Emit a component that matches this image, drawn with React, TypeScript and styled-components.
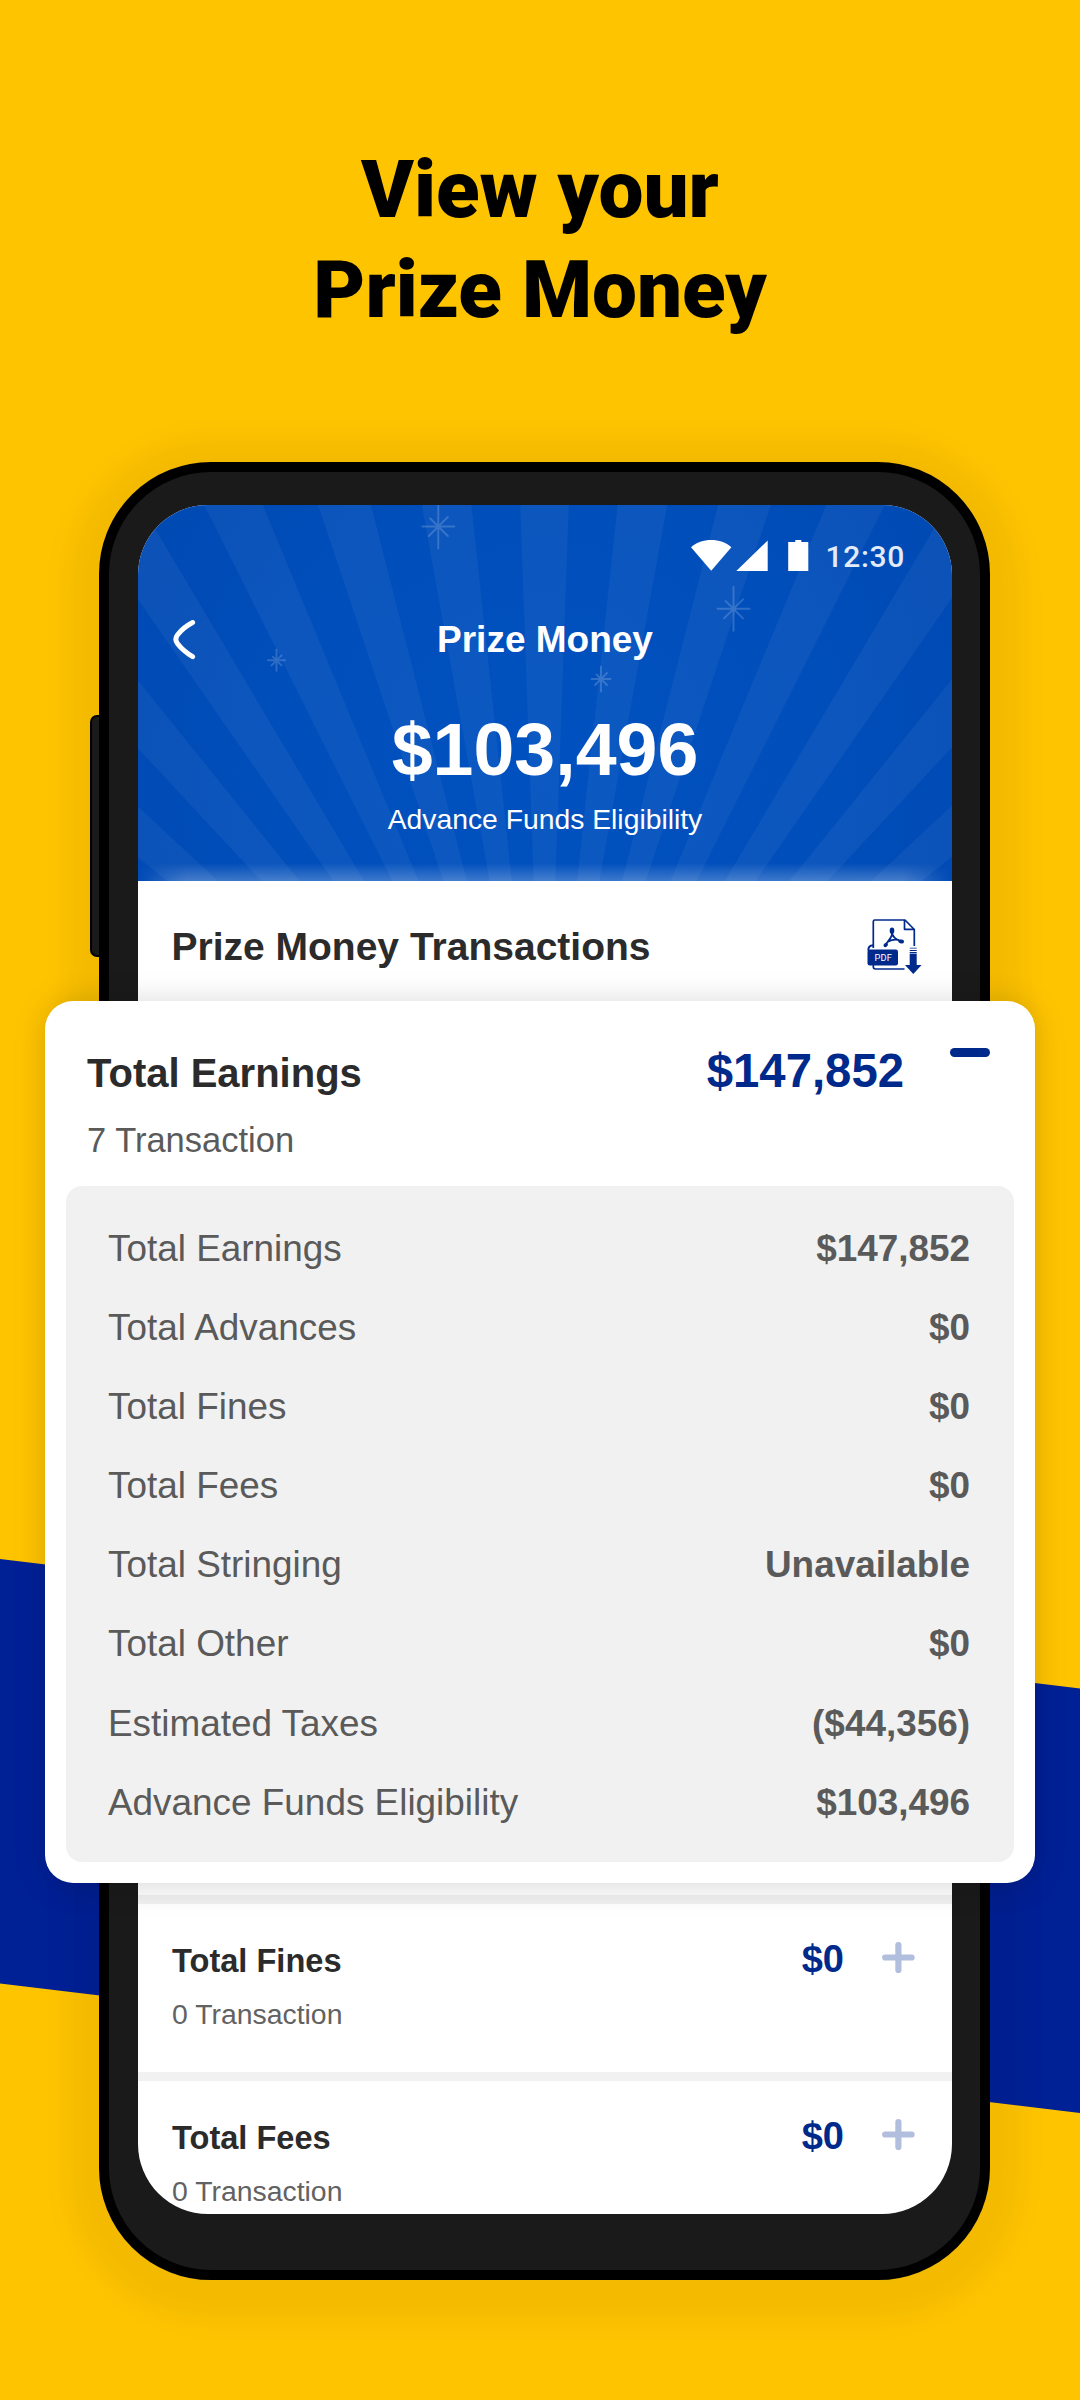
import React from "react";
import styled, { createGlobalStyle } from "styled-components";

const sans = `"Liberation Sans", Arial, sans-serif`;
const navy = "#00298c";

const GlobalStyle = createGlobalStyle`
  *, *::before, *::after { box-sizing: border-box; }
  body { margin: 0; background: #ffc400; }
  h1, h2, h3, p, ul, dl, dd, dt { margin: 0; padding: 0; font-weight: inherit; font-size: inherit; }
  svg { display: block; flex: none; }
`;

const Page = styled.main`
  position: relative;
  width: 1080px;
  height: 2400px;
  overflow: hidden;
  background: #ffc400;
  font-family: ${sans};
`;

const Band = styled.div`
  position: absolute;
  inset: 1559px 0 auto 0;
  height: 555px;
  background: #002096;
  clip-path: polygon(0 0, 100% 129.5px, 100% 554px, 0 424.5px);
`;

const Headline = styled.h1`
  padding-top: 140px;
  height: 340px;
  text-align: center;
  color: #000;
  && { font: 900 80px/100px Roboto, sans-serif; }
`;

const Phone = styled.section`
  position: relative;
  width: 891px;
  height: 1818px;
  margin: 122px 0 0 99px;
  padding: 33px 28px 56px 29px;
  border: 10px solid #000;
  border-radius: 112px;
  background: #1a1a1a;
  box-shadow: 0 8px 28px 32px rgba(0, 0, 0, 0.05);
`;

const SideButton = styled.div`
  position: absolute;
  left: -19px;
  top: 243px;
  width: 9px;
  height: 242px;
  border: 2px solid #000;
  border-right: 0;
  border-radius: 7px 0 0 7px;
  background: #1a1a1a;
`;

const Screen = styled.div`
  height: 1709px;
  border-radius: 70px;
  overflow: hidden;
  background: #fff;
  display: flex;
  flex-direction: column;
`;

const Hero = styled.header`
  position: relative;
  height: 376px;
  flex: none;
  padding-top: 35px;
  color: #fff;
  display: flex;
  flex-direction: column;
  align-items: center;
  isolation: isolate;
`;

const HeroArt = styled.svg`
  position: absolute;
  inset: 0;
  z-index: -1;
`;

const StatusBar = styled.div`
  width: 100%;
  height: 31px;
  padding-right: 47px;
  display: flex;
  justify-content: flex-end;
  align-items: center;
`;

const Clock = styled.time`
  margin-left: 15px;
  padding-top: 1px;
  font: 500 30px/31px Roboto, sans-serif;
  letter-spacing: 0.7px;
  color: #e3ebf8;
`;

const NavBar = styled.div`
  width: 100%;
  height: 44px;
  margin-top: 47px;
  padding: 0 34px;
  display: grid;
  grid-template-columns: 60px 1fr 60px;
  align-items: center;
`;

const NavTitle = styled.h2`
  && { font-size: 37px; font-weight: 700; }
  line-height: 44px;
  text-align: center;
`;

const HeroAmount = styled.p`
  margin-top: 48px;
  font-size: 73.5px;
  font-weight: 700;
  line-height: 80px;
`;

const HeroCaption = styled.p`
  margin-top: 12px;
  font-size: 28.3px;
  line-height: 34px;
`;

const SectionHead = styled.div`
  flex: none;
  height: 57px;
  margin-top: 36px;
  padding: 0 29px 0 33.5px;
  display: flex;
  align-items: center;
  justify-content: space-between;
`;

const SectionTitle = styled.h2`
  && { font-size: 39px; font-weight: 700; }
  padding-top: 2px;
  line-height: 46px;
  color: #2b2b2b;
`;

const List = styled.ul`
  flex: none;
  margin-top: 921px;
  list-style: none;
`;

const Item = styled.li`
  height: 177px;
  padding: 35px 37px 0 34px;
  border-top: 9px solid #f1f1f1;
`;

const ItemTop = styled.div`
  display: flex;
  height: 40px;
  line-height: 40px;
  align-items: baseline;
`;

const ItemTitle = styled.h3`
  && { font-size: 32.6px; font-weight: 700; }
  flex: 1;
  color: #2b2b2b;
`;

const ItemAmount = styled.span`
  margin-right: 38px;
  font-size: 38px;
  font-weight: 700;
  color: ${navy};
`;

const PlusIcon = styled.svg`
  align-self: flex-start;
  margin-top: 2px;
`;

const ItemNote = styled.p`
  margin-top: 18px;
  font-size: 28.4px;
  line-height: 34px;
  color: #626262;
`;

const Card = styled.section`
  position: absolute;
  left: 45px;
  top: 1001px;
  width: 990px;
  height: 882px;
  padding: 46px 21px 21px;
  border-radius: 28px;
  background: #fff;
  box-shadow: 0 2px 32px rgba(0, 0, 0, 0.17);
`;

const CardTop = styled.div`
  display: flex;
  align-items: baseline;
  height: 48px;
  line-height: 48px;
  padding: 0 24px 0 21px;
`;

const CardTitle = styled.h2`
  && { font-size: 40px; font-weight: 700; }
  flex: 1;
  color: #2b2b2b;
`;

const CardAmount = styled.span`
  margin-right: 46px;
  font-size: 47.3px;
  font-weight: 700;
  color: ${navy};
`;

const Collapse = styled.span`
  align-self: flex-start;
  width: 40px;
  height: 9px;
  margin-top: 1px;
  border-radius: 5px;
  background: ${navy};
`;

const CardNote = styled.p`
  margin-top: 24px;
  padding-left: 21px;
  font-size: 34.5px;
  line-height: 42px;
  color: #5a5a5a;
`;

const Panel = styled.dl`
  && { padding: 23px 44px 20px 42px; }
  && { margin-top: 25px; }
  width: 948px;
  height: 676px;
  border-radius: 16px;
  background: #f1f1f1;
`;

const Line = styled.div`
  display: flex;
  justify-content: space-between;
  height: 79.1px;
  line-height: 79px;
  font-size: 36.9px;
  color: #5a5a5a;
`;

const LineValue = styled.dd`
  && { font-weight: 700; }
`;

const rays = Array.from({ length: 23 }, (_, i) => {
  const step = (2 * Math.PI) / 44;
  const mid = (i - 11) * step;
  const at = (a: number) => `${406.5 + 1400 * Math.sin(a)},${680 - 1400 * Math.cos(a)}`;
  return `406.5,680 ${at(mid - step / 4)} ${at(mid + step / 4)}`;
});

const stars = [
  { x: 300.3, y: 21.5, v: 22, h: 16, d: 9.5 },
  { x: 138.5, y: 155.3, v: 10.5, h: 8.5, d: 5 },
  { x: 595.5, y: 103.8, v: 22, h: 16, d: 9.5 },
  { x: 463, y: 174, v: 12.5, h: 9.5, d: 6 },
];

const HeroBackdrop = () => (
  <HeroArt width="814" height="376" viewBox="0 0 814 376">
    <defs>
      <radialGradient id="sky" gradientUnits="userSpaceOnUse" cx="407" cy="260" r="480">
        <stop offset="0" stopColor="#0051c0" />
        <stop offset="0.6" stopColor="#004eba" />
        <stop offset="1" stopColor="#0049b3" />
      </radialGradient>
      <linearGradient id="glow" x1="0" y1="0" x2="0" y2="1">
        <stop offset="0" stopColor="#fff" stopOpacity="0" />
        <stop offset="1" stopColor="#fff" stopOpacity="0.24" />
      </linearGradient>
      <linearGradient id="fade" x1="0" y1="0" x2="1" y2="0">
        <stop offset="0" stopColor="#000" />
        <stop offset="0.06" stopColor="#fff" />
        <stop offset="0.94" stopColor="#fff" />
        <stop offset="1" stopColor="#000" />
      </linearGradient>
      <mask id="edge">
        <rect y="350" width="814" height="26" fill="url(#fade)" />
      </mask>
    </defs>
    <rect width="814" height="376" fill="url(#sky)" />
    {rays.map((points) => (
      <polygon key={points} points={points} fill="#fff" fillOpacity="0.048" />
    ))}
    <g stroke="#fff" strokeOpacity="0.18" strokeWidth="1.9" strokeLinecap="round">
      {stars.map((s) => (
        <path
          key={s.x}
          d={`M${s.x} ${s.y - s.v}v${2 * s.v}M${s.x - s.h} ${s.y}h${2 * s.h}M${s.x - s.d + 1.5} ${s.y - s.d + 1.5}l${2 * s.d - 1.5} ${2 * s.d - 1.5}M${s.x + s.d} ${s.y - s.d}l${-2 * s.d} ${2 * s.d}`}
        />
      ))}
    </g>
    <rect y="358" width="814" height="18" fill="url(#glow)" mask="url(#edge)" />
  </HeroArt>
);

const StatusIcons = () => (
  <svg width="119" height="31" viewBox="0 0 119 31" fill="#fff">
    <path d="M0 7.2C5.500 2.500 12.600 0 20.200 0S34.900 2.500 40.400 7.200L20.200 30.800Z" />
    <path d="M45.300 31L76.700 0.500V31Z" />
    <path d="M104.300 0h6v1.900h7V31H97.200V1.900h7.100Z" />
  </svg>
);

const BackIcon = () => (
  <svg width="26" height="42" viewBox="0 0 26 42" fill="none" stroke="#fff" strokeWidth="5" strokeLinecap="round">
    <path d="M20.600 3.500C14 7 9 11.300 5.600 15.700C3.200 18.800 3.200 21.700 5.600 24.800C9 29.200 14 33.700 20.600 37.700" />
  </svg>
);

const PdfIcon = () => (
  <svg width="56" height="57" viewBox="0 0 56 57" fill="none" stroke={navy} strokeWidth="1.7" strokeLinejoin="round">
    <path d="M6.300 31V4.500Q6.300 3 7.800 3H38L47.300 12.500V29" />
    <path d="M37.500 3V12.300H47.300" />
    <path d="M6.300 28.300Q1.300 28.300 1.300 33.500" strokeWidth="2" />
    <path d="M6.300 48V49.800Q6.300 52 8.500 52H37.500" />
    <rect x="0.500" y="32.500" width="30.500" height="16" rx="2.200" fill={navy} stroke="none" />
    <text x="16.300" y="44" textAnchor="middle" fontFamily="Roboto, sans-serif" fontSize="9.300" letterSpacing="0.100" fill="#fff" stroke="none">
      PDF
    </text>
    <path d="M25 14.500C27 19 20 25 18.200 28.200M25 14.500C24 19 30 23.500 35 24.500M20.500 25Q26 21.800 32 23" strokeWidth="1.800" />
    <g fill={navy} stroke="none">
      <ellipse cx="25" cy="13.700" rx="2.300" ry="3.200" />
      <ellipse cx="18.700" cy="28" rx="2.400" ry="1.900" transform="rotate(-38 18.700 28)" />
      <ellipse cx="34.200" cy="24.500" rx="2.800" ry="2" transform="rotate(10 34.200 24.500)" />
      <path d="M42.700 30.800h7v0.800h-7zM42.700 32.900h7v1.100h-7zM42.700 34.900h7v1.300h-7z" />
      <path d="M42.700 36.800h7V48h4.900L46.300 57L38 48h4.700Z" />
    </g>
  </svg>
);

const Plus = () => (
  <PlusIcon width="33" height="33" viewBox="0 0 33 33" stroke="#b2bedd" strokeWidth="6.2" strokeLinecap="round">
    <path d="M3.200 16.500H29.600M16.400 4V29" />
  </PlusIcon>
);

const breakdown = [
  ["Total Earnings", "$147,852"],
  ["Total Advances", "$0"],
  ["Total Fines", "$0"],
  ["Total Fees", "$0"],
  ["Total Stringing", "Unavailable"],
  ["Total Other", "$0"],
  ["Estimated Taxes", "($44,356)"],
  ["Advance Funds Eligibility", "$103,496"],
];

export default function App() {
  return (
    <Page>
      <GlobalStyle />
      <Band />
      <Headline>
        View your
        <br />
        Prize Money
      </Headline>
      <Phone>
        <SideButton />
        <Screen>
          <Hero>
            <HeroBackdrop />
            <StatusBar>
              <StatusIcons />
              <Clock>12:30</Clock>
            </StatusBar>
            <NavBar>
              <BackIcon />
              <NavTitle>Prize Money</NavTitle>
            </NavBar>
            <HeroAmount>$103,496</HeroAmount>
            <HeroCaption>Advance Funds Eligibility</HeroCaption>
          </Hero>
          <SectionHead>
            <SectionTitle>Prize Money Transactions</SectionTitle>
            <PdfIcon />
          </SectionHead>
          <List>
            {["Total Fines", "Total Fees"].map((name) => (
              <Item key={name}>
                <ItemTop>
                  <ItemTitle>{name}</ItemTitle>
                  <ItemAmount>$0</ItemAmount>
                  <Plus />
                </ItemTop>
                <ItemNote>0 Transaction</ItemNote>
              </Item>
            ))}
          </List>
        </Screen>
      </Phone>
      <Card>
        <CardTop>
          <CardTitle>Total Earnings</CardTitle>
          <CardAmount>$147,852</CardAmount>
          <Collapse />
        </CardTop>
        <CardNote>7 Transaction</CardNote>
        <Panel>
          {breakdown.map(([label, value]) => (
            <Line key={label}>
              <dt>{label}</dt>
              <LineValue>{value}</LineValue>
            </Line>
          ))}
        </Panel>
      </Card>
    </Page>
  );
}
